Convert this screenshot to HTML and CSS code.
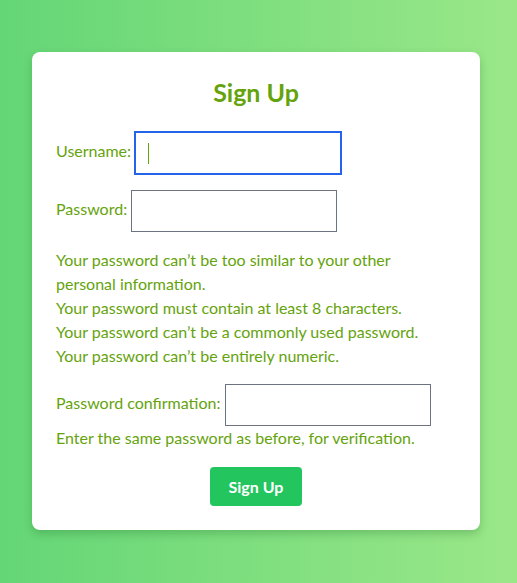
FILE: index.html
```html
<!DOCTYPE html>
<html lang="en">
<head>
<meta charset="utf-8">
<title>Sign Up</title>
<link rel="stylesheet" href="styles.css">
</head>
<body>
<main class="page">
  <div class="card">
    <h2 class="title">Sign Up</h2>
    <form class="form">
      <p class="field"><label for="id_username">Username:</label> <span class="input-wrap"><input type="text" id="id_username" class="input input-focus"><span class="caret" aria-hidden="true"></span></span></p>
      <p class="field"><label for="id_password1">Password:</label> <input type="password" id="id_password1" class="input"></p>
      <ul class="help-list">
        <li>Your password can’t be too similar to your other personal information.</li>
        <li>Your password must contain at least 8 characters.</li>
        <li>Your password can’t be a commonly used password.</li>
        <li>Your password can’t be entirely numeric.</li>
      </ul>
      <p class="field field-confirm"><label for="id_password2">Password confirmation:</label> <input type="password" id="id_password2" class="input"><br><span class="help">Enter the same password as before, for verification.</span></p>
      <div class="actions"><button type="submit" class="btn">Sign Up</button></div>
    </form>
  </div>
</main>
</body>
</html>
```
FILE: styles.css
```css
* { box-sizing: border-box; }
html, body { margin: 0; padding: 0; }
body {
  font-family: "Lato", "Noto Sans", sans-serif;
  font-size: 16px;
  line-height: 24px;
  color: #65a30d;
}
.page {
  min-height: 583px;
  background: linear-gradient(to right, #64d676, #9ae788);
  padding: 52px 32px 54px 32px;
}
.card {
  width: 448px;
  background: #fff;
  border-radius: 8px;
  box-shadow: 0 4px 8px rgba(20, 90, 30, 0.25);
  padding: 24px;
}
.title {
  margin: 0;
  text-align: center;
  font-size: 25px;
  line-height: 32px;
  font-weight: 700;
  color: #65a30d;
}
.form { margin: 0; }
.field { margin: 24px 0 0 0; }
.field + .field { margin-top: 16px; }
label { color: #65a30d; }
.input-wrap {
  position: relative;
  display: inline-block;
  vertical-align: middle;
}
.input {
  width: 206px;
  height: 42px;
  padding: 8px 12px;
  border: 1px solid #6b7280;
  border-radius: 0;
  font: inherit;
  color: #65a30d;
  caret-color: #65a30d;
  vertical-align: middle;
  background: #fff;
}
.input-wrap .input { display: block; }
.input-focus {
  outline: 1px solid #2563eb;
  border-color: #2563eb;
}
.caret {
  position: absolute;
  left: 13px;
  top: 11px;
  width: 1px;
  height: 21px;
  background: #65a30d;
}
.help-list {
  list-style: none;
  margin: 16px 0 0 0;
  padding: 0;
  max-width: 390px;
}
.field-confirm { margin-top: 16px; }
.help { color: #65a30d; }
.actions {
  display: flex;
  justify-content: center;
  margin-top: 17px;
}
.btn {
  background: #22c55e;
  color: #fff;
  border: 0;
  border-radius: 4px;
  font: inherit;
  font-weight: 700;
  padding: 8px 16px;
  width: 92px;
  height: 39px;
}
```
